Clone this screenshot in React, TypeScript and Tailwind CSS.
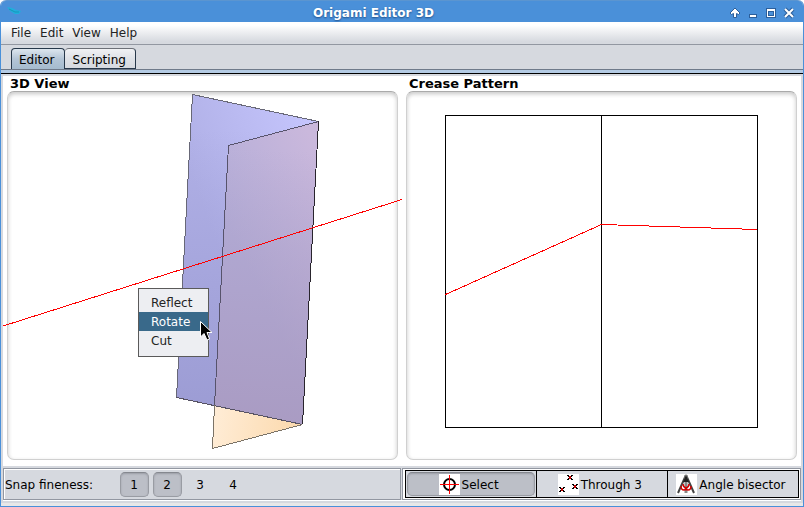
import { useState } from "react";
import type { ReactNode } from "react";

function CraneLogo() {
  return (
    <svg width="16" height="14" viewBox="0 0 16 14" aria-hidden="true">
      <path d="M0 2 L5 3 L9 5 L14 6 L12 9 L8 9 L3 6 Z" fill="#1fb0dc" />
      <path d="M2 4 L8 7 L12 7" stroke="#1b93b8" fill="none" />
    </svg>
  );
}

function WindowButton({ label, children }: { label: string; children: ReactNode }) {
  return (
    <button type="button" aria-label={label} className="flex size-[14px] items-center justify-center">
      <svg width="12" height="12" viewBox="0 0 12 12" aria-hidden="true" shapeRendering="crispEdges">
        {children}
      </svg>
    </button>
  );
}

function TitleBar() {
  return (
    <header className="flex h-[22px] shrink-0 items-center rounded-t-md border-t border-[#5b95d0] bg-[#4a90d9] pr-[7px] pl-[6px]">
      <CraneLogo />
      <h1 className="flex-1 pt-[3px] pr-1 text-center text-xs leading-4 font-bold text-white [text-shadow:0_1px_2px_#1f4f88]">
        Origami Editor 3D
      </h1>
      <div className="flex gap-1 pt-[2px]">
        <WindowButton label="Shade">
          <path
            d="M6 1 L11 6 L9.5 7.5 L7.5 6.5 V10.5 H4.5 V6.5 L2.5 7.5 L1 6 Z"
            fill="#fff"
            stroke="#2c5f9b"
            strokeWidth="1"
            shapeRendering="auto"
          />
        </WindowButton>
        <WindowButton label="Minimize">
          <path d="M2 7 H10 V11 H2 Z" fill="#2c5f9b" />
          <path d="M3 8 H9 V10 H3 Z" fill="#fff" />
        </WindowButton>
        <WindowButton label="Maximize">
          <path d="M1 1 H11 V11 H1 Z" fill="#2c5f9b" />
          <path d="M2 2 H10 V10 H2 Z" fill="#fff" />
          <path d="M3 4 H9 V9 H3 Z" fill="#2c5f9b" />
          <path d="M4 5 H8 V8 H4 Z" fill="#4a90d9" />
        </WindowButton>
        <WindowButton label="Close">
          <g shapeRendering="auto">
            <path d="M2 2 L10 10 M10 2 L2 10" stroke="#2c5f9b" strokeWidth="4" />
            <path d="M2 2 L10 10 M10 2 L2 10" stroke="#fff" strokeWidth="2" />
          </g>
        </WindowButton>
      </div>
    </header>
  );
}

const menus = ["File", "Edit", "View", "Help"];

function MenuBar() {
  return (
    <nav className="flex h-[23px] shrink-0 items-center gap-[9px] border-b border-[#9297a1] bg-linear-to-b from-white from-15% via-[#e3e5e9] via-65% to-[#d6d9df] to-90% pl-[10px] text-[#232323]">
      {menus.map((name) => (
        <button key={name} type="button">
          {name}
        </button>
      ))}
    </nav>
  );
}

function Tabs() {
  const [active, setActive] = useState("Editor");
  return (
    <div className="shrink-0">
      <div role="tablist" className="flex h-[25px] items-end border-b border-[#6f7a8a] pl-[10px]">
        {["Editor", "Scripting"].map((name) => (
          <button
            key={name}
            type="button"
            role="tab"
            aria-selected={name === active}
            onClick={() => setActive(name)}
            className={
              name === active
                ? "h-[21px] rounded-t-[4px] border border-b-0 border-[#27384a] bg-linear-to-b from-[#dde6ee] via-[#b4c5d6] to-[#a5bbce] pt-px pr-[9px] pl-[7px]"
                : "h-[21px] rounded-t-[4px] border border-l-0 border-[#27384a] border-t-[#6c7078] bg-linear-to-b from-[#f0f1f4] via-[#dfe2e7] to-[#d6d9df] pt-[2px] pr-[9px] pl-2"
            }
          >
            {name}
          </button>
        ))}
      </div>
      <div className="h-1 border-b border-black bg-[#b4cbe4]" />
    </div>
  );
}

function View({ title, children }: { title: string; children: ReactNode }) {
  return (
    <section className="relative flex flex-1 flex-col px-1 pb-[6px]">
      <h2 className="h-[15px] pl-[3px] text-[13px] leading-4 font-bold text-black">{title}</h2>
      <div className="flex-1 rounded-[7px] border border-[#d0d0d0] border-t-[#aaaaaa] bg-white shadow-[inset_0_2px_4px_#c8c8c8]" />
      {children}
    </section>
  );
}

function FoldedPaper() {
  return (
    <svg
      className="absolute inset-0 h-full w-full"
      viewBox="3 76 399 390"
      role="img"
      aria-label="Folded paper"
      shapeRendering="crispEdges"
    >
      <defs>
        <linearGradient id="back" gradientUnits="userSpaceOnUse" x1="310" y1="115" x2="186" y2="160">
          <stop offset="0" stopColor="#c5c5fd" />
          <stop offset="1" stopColor="#b0b0e6" />
        </linearGradient>
        <linearGradient id="depth" gradientUnits="userSpaceOnUse" x1="0" y1="130" x2="0" y2="410">
          <stop offset="0" stopColor="#9a9ad2" stopOpacity="0" />
          <stop offset="1" stopColor="#9a9ad2" stopOpacity="0.9" />
        </linearGradient>
        <linearGradient id="front" gradientUnits="userSpaceOnUse" x1="318" y1="150" x2="215" y2="200">
          <stop offset="0" stopColor="#cab8dc" />
          <stop offset="1" stopColor="#b3add8" />
        </linearGradient>
        <linearGradient id="shade" gradientUnits="userSpaceOnUse" x1="280" y1="150" x2="265" y2="415">
          <stop offset="0" stopColor="#a899c0" stopOpacity="0" />
          <stop offset="1" stopColor="#a899c0" stopOpacity="0.85" />
        </linearGradient>
        <linearGradient id="flap" gradientUnits="userSpaceOnUse" x1="215" y1="420" x2="302" y2="435">
          <stop offset="0" stopColor="#ffecd5" />
          <stop offset="1" stopColor="#fbd8ab" />
        </linearGradient>
      </defs>
      <path d="M192.5 94.5 L318.5 121.5 L302.5 424.5 L176.5 397.5 Z" fill="url(#back)" />
      <path d="M192.5 94.5 L318.5 121.5 L302.5 424.5 L176.5 397.5 Z" fill="url(#depth)" />
      <path d="M318.5 121.5 L302.5 424.5 L214.5 405.5 L228.5 145.5 Z" fill="url(#front)" />
      <path d="M318.5 121.5 L302.5 424.5 L214.5 405.5 L228.5 145.5 Z" fill="url(#shade)" />
      <path d="M214.5 405.5 L302.5 424.5 L212.5 448.5 Z" fill="url(#flap)" />
      <g fill="none" strokeWidth="1">
        <path d="M318.5 121.5 L192.5 94.5 L176.5 397.5" stroke="#686877" />
        <path d="M176.5 397.5 L302.5 424.5" stroke="#565263" />
        <path d="M318.5 121.5 L228.5 145.5 L214.5 405.5" stroke="#57536b" />
        <path d="M214.5 405.5 L212.5 448.5 L302.5 424.5" stroke="#7b7367" />
        <path d="M318.5 121.5 L302.5 424.5" stroke="#29252d" />
        <path d="M3 326 L402 199.5" stroke="#ff0000" />
      </g>
    </svg>
  );
}

function CreaseDrawing() {
  return (
    <svg
      className="absolute inset-0 h-full w-full"
      viewBox="402 76 399 390"
      role="img"
      aria-label="Crease pattern"
      shapeRendering="crispEdges"
    >
      <g fill="none" strokeWidth="1">
        <path d="M445.5 115.5 H757.5 V427.5 H445.5 Z M601.5 115.5 V427.5" stroke="#000" />
        <path d="M445.5 294.5 L601.5 224.5 L757.5 229.5" stroke="#ff0000" />
      </g>
    </svg>
  );
}

function ContextMenu() {
  return (
    <div
      role="menu"
      className="absolute top-[212px] left-[135px] flex w-[71px] flex-col border border-[#5a5a5a] bg-[#edeef2] pt-1 pb-[6px] text-[#232323]"
    >
      {["Reflect", "Rotate", "Cut"].map((name) => (
        <button
          key={name}
          type="button"
          role="menuitem"
          className={
            name === "Rotate"
              ? "h-[19px] bg-[#39698a] pl-3 text-left text-white"
              : "h-[19px] pl-3 text-left"
          }
        >
          {name}
        </button>
      ))}
      <svg className="absolute top-[32px] left-[61px]" width="13" height="20" viewBox="0 0 13 20" aria-hidden="true">
        <path
          d="M0.5 0.5 V16 L4 12.5 L7 19 L9.5 18 L7 11.5 H12 Z"
          fill="#000"
          stroke="#fff"
          strokeWidth="1"
        />
      </svg>
    </div>
  );
}

function SnapBar() {
  const [value, setValue] = useState(2);
  return (
    <div className="mr-px flex h-8 flex-1 items-center border border-[#9297a1] bg-[#d6d9df] pl-px shadow-[inset_1px_1px_0_#fff]">
      <span id="snap" className="w-[115px] pt-px">
        Snap fineness:
      </span>
      <div role="group" aria-labelledby="snap" className="flex gap-1">
        {[1, 2, 3, 4].map((n) => (
          <button
            key={n}
            type="button"
            aria-pressed={n <= value}
            onClick={() => setValue(n)}
            className={
              n <= value
                ? "h-[25px] w-[29px] rounded-[5px] border border-[#999ca3] border-t-[#85888f] bg-[#bcbfc7] pt-px pr-px shadow-[inset_0_1px_2px_#9b9ea6]"
                : "h-[25px] w-[29px] pt-px pr-px"
            }
          >
            {n}
          </button>
        ))}
      </div>
    </div>
  );
}

function SelectIcon() {
  return (
    <svg width="21" height="21" viewBox="0 0 21 21" className="bg-white" aria-hidden="true">
      <circle cx="10.5" cy="10.5" r="5.5" fill="none" stroke="#000" strokeWidth="2" />
      <path d="M10.5 1 V20 M1 10.5 H20" stroke="#ff0000" shapeRendering="crispEdges" />
    </svg>
  );
}

function ThroughIcon() {
  return (
    <svg width="21" height="21" viewBox="0 0 21 21" className="bg-white" aria-hidden="true">
      {[
        [9, 1],
        [14, 10],
        [1, 13],
      ].map(([x, y]) => (
        <g key={x} transform={`translate(${x} ${y})`}>
          <path
            d="M0 0.5 H2 M4 0.5 H6 M0 4.5 H2 M4 4.5 H6 M1 1.5 H2 M4 1.5 H5 M1 3.5 H2 M4 3.5 H5"
            stroke="#000"
            shapeRendering="crispEdges"
          />
          <path d="M2 1 H4 V4 H2 Z" fill="#c00000" />
        </g>
      ))}
    </svg>
  );
}

function BisectorIcon() {
  return (
    <svg width="21" height="21" viewBox="0 0 21 21" className="bg-white" aria-hidden="true">
      <path d="M10 1 L2 19 M10 1 L18 19" stroke="#444" strokeWidth="2" fill="none" />
      <path d="M10 1 V19" stroke="#888" strokeWidth="3" />
      <path d="M10 1 L7 8 H13 Z" fill="#222" />
      <path
        d="M5 12 Q5 16 8 16 Q10 16 10 14 Q10 16 12 16 Q15 16 15 12 M7 10 Q7 13 10 14 Q13 13 13 10"
        stroke="#d40000"
        strokeWidth="1.5"
        fill="none"
      />
    </svg>
  );
}

const tools = [
  { name: "Select", icon: <SelectIcon /> },
  { name: "Through 3", icon: <ThroughIcon /> },
  { name: "Angle bisector", icon: <BisectorIcon /> },
];

function ToolBar() {
  const [tool, setTool] = useState("Select");
  return (
    <div className="flex h-8 flex-1 border border-[#9297a1] bg-white py-px pr-px pl-[2px]">
      {tools.map(({ name, icon }) => (
        <button
          key={name}
          type="button"
          aria-pressed={tool === name}
          onClick={() => setTool(name)}
          className="-mr-px flex min-w-0 flex-1 border border-black bg-[#d6d9df] p-px whitespace-nowrap last:mr-0"
        >
          <span
            className={
              tool === name
                ? "flex h-full w-full items-center justify-center gap-[2px] rounded-[5px] border border-[#999ca3] border-t-[#85888f] bg-[#bcbfc7] pr-1 shadow-[inset_0_1px_2px_#9b9ea6]"
                : "flex h-full w-full items-center justify-center gap-[2px] pr-1"
            }
          >
            {icon}
            <span className="pt-px">{name}</span>
          </span>
        </button>
      ))}
    </div>
  );
}

export default function App() {
  return (
    <div className="bg-white font-['DejaVu_Sans','Liberation_Sans',sans-serif] text-xs leading-4 text-black">
      <div className="flex min-h-screen flex-col rounded-t-md border-x border-b border-[#4a90d9] bg-[#d6d9df]">
        <TitleBar />
        <MenuBar />
        <Tabs />
        <main className="flex flex-1 flex-col px-[2px] pt-[2px] pb-[2px]">
          <div className="mb-[2px] flex flex-1 bg-white">
            <View title="3D View">
              <FoldedPaper />
              <ContextMenu />
            </View>
            <View title="Crease Pattern">
              <CreaseDrawing />
            </View>
          </div>
          <div className="flex border-b border-white">
            <SnapBar />
            <ToolBar />
          </div>
        </main>
        <footer className="h-[3px] shrink-0 bg-[#e8e8e8]" />
      </div>
    </div>
  );
}
